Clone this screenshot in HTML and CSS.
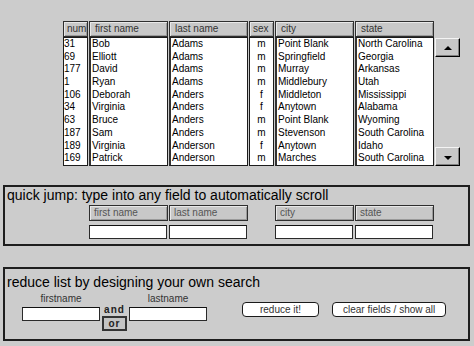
FILE: index.html
```html
<!DOCTYPE html>
<html lang="en">
<head>
    <meta charset="UTF-8">
    <title>Name List</title>
    <link rel="stylesheet" href="styles.css">
</head>
<body>
    <div class="table">
        <div class="col num">
            <div class="head">num</div>
            <div class="list">
                <div>31</div><div>69</div><div>177</div><div>1</div><div>106</div>
                <div>34</div><div>63</div><div>187</div><div>189</div><div>169</div>
            </div>
        </div>
        <div class="col wide">
            <div class="head">first name</div>
            <div class="list thick">
                <div>Bob</div><div>Elliott</div><div>David</div><div>Ryan</div><div>Deborah</div>
                <div>Virginia</div><div>Bruce</div><div>Sam</div><div>Virginia</div><div>Patrick</div>
            </div>
        </div>
        <div class="col wide">
            <div class="head">last name</div>
            <div class="list thick">
                <div>Adams</div><div>Adams</div><div>Adams</div><div>Adams</div><div>Anders</div>
                <div>Anders</div><div>Anders</div><div>Anders</div><div>Anderson</div><div>Anderson</div>
            </div>
        </div>
        <div class="col sex">
            <div class="head">sex</div>
            <div class="list center">
                <div>m</div><div>m</div><div>m</div><div>m</div><div>f</div>
                <div>f</div><div>m</div><div>m</div><div>f</div><div>m</div>
            </div>
        </div>
        <div class="col wide">
            <div class="head">city</div>
            <div class="list thick">
                <div>Point Blank</div><div>Springfield</div><div>Murray</div><div>Middlebury</div><div>Middleton</div>
                <div>Anytown</div><div>Point Blank</div><div>Stevenson</div><div>Anytown</div><div>Marches</div>
            </div>
        </div>
        <div class="col wide">
            <div class="head">state</div>
            <div class="list thick">
                <div>North Carolina</div><div>Georgia</div><div>Arkansas</div><div>Utah</div><div>Mississippi</div>
                <div>Alabama</div><div>Wyoming</div><div>South Carolina</div><div>Idaho</div><div>South Carolina</div>
            </div>
        </div>
        <div class="scroll">
            <button class="arrow up"></button>
            <button class="arrow down"></button>
        </div>
    </div>

    <div class="box jump">
        <div class="title">quick jump: type into any field to automatically scroll</div>
        <div class="fields">
            <div class="field">
                <div class="head label">first name</div>
                <input type="text" class="entry">
            </div>
            <div class="field">
                <div class="head label">last name</div>
                <input type="text" class="entry">
            </div>
            <div class="field skip">
                <div class="head label">city</div>
                <input type="text" class="entry">
            </div>
            <div class="field">
                <div class="head label">state</div>
                <input type="text" class="entry">
            </div>
        </div>
    </div>

    <div class="box reduce">
        <div class="title">reduce list by designing your own search</div>
        <div class="search">
            <div class="named">
                <div class="small">firstname</div>
                <input type="text" class="entry">
            </div>
            <div class="logic">
                <div class="and">and</div>
                <div class="or">or</div>
            </div>
            <div class="named">
                <div class="small">lastname</div>
                <input type="text" class="entry">
            </div>
            <button class="pill first">reduce it!</button>
            <button class="pill">clear fields / show all</button>
        </div>
    </div>
</body>
</html>
```

FILE: styles.css
```css
body {
    margin: 0;
    padding-top: 21px;
    background: #cccccc;
    font-family: "Liberation Sans", Arial, sans-serif;
    color: #000;
}
.table {
    display: flex;
    gap: 1px;
    margin-left: 63px;
}
.col {
    display: flex;
    flex-direction: column;
}
.num { width: 25px; }
.wide { width: 79px; }
.sex { width: 25px; }
.head {
    box-sizing: border-box;
    height: 16px;
    border: 1px solid #2e2e2e;
    background: #c8c8c8;
    box-shadow: inset 1px 1px #e8e8e8, inset -1px -1px #9a9a9a;
    font-size: 10px;
    line-height: 14px;
    color: #333;
    padding-left: 3px;
    white-space: nowrap;
    overflow: hidden;
}
.wide .head { padding-left: 5px; }
.list {
    box-sizing: border-box;
    height: 129px;
    background: #fff;
    border: 1px solid #1c1c1c;
    font-size: 10px;
    overflow: hidden;
}
.list div {
    height: 12.7px;
    line-height: 12.7px;
    white-space: nowrap;
}
.thick {
    border-left-width: 2px;
    border-left-color: #333;
}
.thick div { padding-left: 1px; }
.center div { text-align: center; }
.scroll {
    display: flex;
    flex-direction: column;
    justify-content: space-between;
    width: 25px;
    padding: 17px 0 0;
    height: 128px;
}
.arrow {
    box-sizing: border-box;
    width: 25px;
    height: 19px;
    padding: 0;
    background: #c8c8c8;
    border: 1px solid;
    border-color: #f4f4f4 #000 #000 #f4f4f4;
    box-shadow: inset -1px -1px #808080;
    position: relative;
}
.arrow::after {
    content: "";
    position: absolute;
    left: 8px;
    top: 7px;
    border-left: 4px solid transparent;
    border-right: 4px solid transparent;
}
.up::after { border-bottom: 4px solid #000; }
.down::after { border-top: 4px solid #000; top: 8px; }

.box {
    box-sizing: border-box;
    margin-left: 3px;
    width: 467px;
    border: 2px solid #1e1e1e;
}
.jump {
    margin-top: 19px;
    height: 61px;
}
.title {
    font-size: 14px;
    line-height: 16px;
    padding-left: 2px;
    white-space: nowrap;
}
.fields {
    display: flex;
    gap: 1px;
    margin: 2px 0 0 84px;
}
.field {
    display: flex;
    flex-direction: column;
    gap: 4px;
    width: 79px;
}
.field.skip { margin-left: 26px; }
.label { color: #555; padding-left: 4px; }
.entry {
    box-sizing: border-box;
    width: 78px;
    height: 14px;
    margin: 0;
    padding: 0;
    background: #fff;
    border: 1px solid #2a2a2a;
    border-top-color: #111;
}
.reduce {
    margin-top: 21px;
    height: 74px;
    padding-top: 5px;
}
.search {
    display: flex;
    align-items: flex-start;
    margin: 3px 0 0 17px;
}
.named {
    display: flex;
    flex-direction: column;
    align-items: center;
    gap: 2px;
}
.small {
    font-size: 10px;
    line-height: 12px;
    color: #333;
}
.logic {
    display: flex;
    flex-direction: column;
    align-items: center;
    width: 25px;
    margin: 11px 2px 0;
}
.and, .or {
    font-size: 10px;
    font-weight: bold;
    letter-spacing: 1px;
    color: #222;
}
.and { line-height: 12px; }
.or {
    box-sizing: border-box;
    width: 25px;
    height: 15px;
    line-height: 11px;
    text-align: center;
    border: 2px solid #333;
    background: #c4c4c4;
}
.pill {
    box-sizing: border-box;
    height: 15px;
    margin-top: 9px;
    margin-left: 13px;
    padding: 0 10px;
    background: #fff;
    border: 1px solid #1a1a1a;
    border-radius: 4px;
    font-family: "Liberation Sans", Arial, sans-serif;
    font-size: 10px;
    line-height: 13px;
    color: #333;
}
.pill.first {
    width: 77px;
    margin-left: 35px;
}
```
